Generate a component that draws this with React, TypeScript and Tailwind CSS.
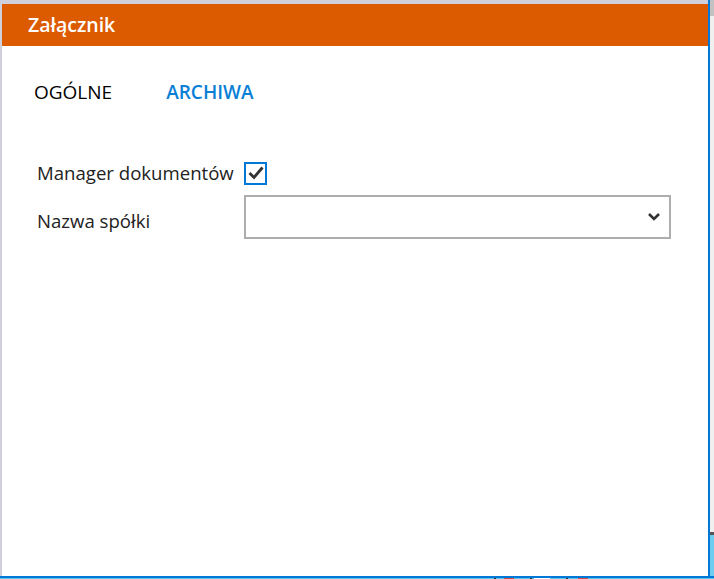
import React from "react";

const font = { fontFamily: '"Open Sans", "Noto Sans", sans-serif' };

export default function App() {
  return (
    <div className="w-[714px] h-[579px] overflow-hidden flex flex-col bg-white" style={font}>
      <div className="flex h-[576px]">
        <div className="w-[708px] flex flex-col">
          <div className="h-[4px] bg-[#cfd0dc]" />
          <div className="flex flex-1">
            <div className="w-[2px] bg-[#cfd0dc]" />
            <div className="flex-1 flex flex-col bg-white">
              <div className="h-[42px] bg-[#dc5a00] flex items-center pl-[26px]">
                <span className="text-white text-[19.5px] font-semibold leading-none">Załącznik</span>
              </div>
              <div className="flex items-center pl-[32px] mt-[34px] h-[24px]">
                <span className="text-[19px] text-black leading-none">OGÓLNE</span>
                <span className="text-[19px] font-semibold text-[#0a7fd6] leading-none ml-[54px]">ARCHIWA</span>
              </div>
              <div className="flex flex-col pl-[35px] mt-[58px]">
                <div className="flex items-center h-[22px]">
                  <span className="w-[207px] text-[18.6px] text-[#222] leading-none">Manager dokumentów</span>
                  <div className="w-[23px] h-[23px] border-2 border-[#0078d7] flex items-center justify-center">
                    <svg width="16" height="14" viewBox="0 0 16 14">
                      <path d="M1.5 7 L6 11.5 L14.5 1.5" fill="none" stroke="#333" strokeWidth="2.8" />
                    </svg>
                  </div>
                </div>
                <div className="flex items-start mt-[11px]">
                  <span className="w-[207px] text-[18.6px] text-[#222] leading-none pt-[17px]">Nazwa spółki</span>
                  <div className="w-[427px] h-[44px] border-2 border-[#adadad] flex items-center justify-end pr-[8px]">
                    <svg width="14" height="10" viewBox="0 0 14 10">
                      <path d="M2 2 L7 7 L12 2" fill="none" stroke="#333" strokeWidth="2.6" />
                    </svg>
                  </div>
                </div>
              </div>
            </div>
          </div>
        </div>
        <div className="w-[2px] bg-[#0078d7]" />
        <div className="w-[4px] flex flex-col bg-[#f0f0f0]">
          <div className="h-[16px] bg-[#c2c2c2]" />
          <div className="flex-1" />
          <div className="h-[3px] bg-[#555]" />
          <div className="h-[41px] bg-[#6ccdf0]" />
        </div>
      </div>
      <div className="h-[2px] bg-[#0078d7]" />
      <div className="h-[1px] bg-[#5fc6ee] flex">
        <div className="ml-[494px] w-[2px] bg-[#333]" />
        <div className="ml-[8px] w-[10px] bg-[#d24b4b]" />
        <div className="ml-[16px] w-[2px] bg-[#333]" />
        <div className="ml-[2px] w-[16px] bg-white" />
        <div className="ml-[16px] w-[2px] bg-[#333]" />
        <div className="ml-[10px] w-[10px] bg-[#d24b4b]" />
      </div>
    </div>
  );
}
